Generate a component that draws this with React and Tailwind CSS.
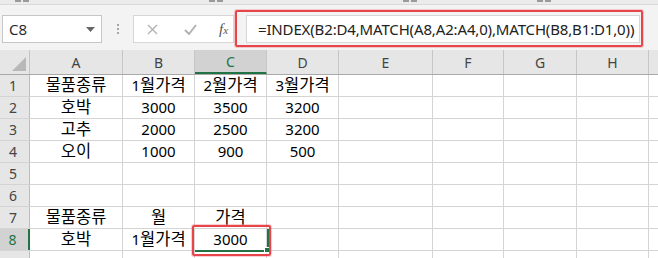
import React from 'react';

const cols = [
  { key: 'A', w: 'w-[93px]' },
  { key: 'B', w: 'w-[72px]' },
  { key: 'C', w: 'w-[72px]' },
  { key: 'D', w: 'w-[72px]' },
  { key: 'E', w: 'w-[94px]' },
  { key: 'F', w: 'w-[71px]' },
  { key: 'G', w: 'w-[73px]' },
  { key: 'H', w: 'w-[72px]' },
];

const data = {
  1: ['물품종류', '1월가격', '2월가격', '3월가격'],
  2: ['호박', '3000', '3500', '3200'],
  3: ['고추', '2000', '2500', '3200'],
  4: ['오이', '1000', '900', '500'],
  5: [],
  6: [],
  7: ['물품종류', '월', '가격'],
  8: ['호박', '1월가격', '3000'],
};

// hangul glyphs a bit larger than digits, as in the sheet's font
const CellText = ({ text }) =>
  text.split(/(\d+)/).filter(Boolean).map((part, i) =>
    /\d/.test(part) ? (
      <span key={i} className="text-[15px]">{part}</span>
    ) : (
      <span key={i} className="text-[16.5px]">{part}</span>
    )
  );

const Cell = ({ w, children }) => (
  <div className={`${w} shrink-0 h-full border-r border-[#d4d4d4] flex items-center justify-center text-black whitespace-nowrap leading-none`}>
    {children}
  </div>
);

const App = () => {
  return (
    <div className="relative w-[658px] h-[258px] overflow-hidden bg-white font-['Noto_Sans','Noto_Sans_CJK_KR',sans-serif]">
      {/* ribbon edge */}
      <div className="h-[5px] bg-[#ebebeb] border-b border-[#dadada] flex">
        <div className="ml-[15px] w-[6px] h-[2px] bg-[#9a9a9a]" />
        <div className="ml-[2px] w-[6px] h-[2px] bg-[#9a9a9a]" />
        <div className="ml-[180px] w-[6px] h-[2px] bg-[#9a9a9a]" />
        <div className="ml-[2px] w-[6px] h-[2px] bg-[#9a9a9a]" />
        <div className="ml-[180px] w-[6px] h-[2px] bg-[#9a9a9a]" />
        <div className="ml-[2px] w-[6px] h-[2px] bg-[#9a9a9a]" />
        <div className="ml-[120px] w-[6px] h-[2px] bg-[#9a9a9a]" />
        <div className="ml-[2px] w-[6px] h-[2px] bg-[#9a9a9a]" />
      </div>

      {/* formula bar */}
      <div className="h-[45px] bg-[#f3f3f3] flex items-start pt-[10px]">
        <div className="ml-[2px] w-[100px] h-[28px] bg-white border border-[#c6c6c6] flex items-center pl-[6px] pr-[6px]">
          <span className="text-[15px] text-[#222] font-['Open_Sans',sans-serif] flex-1">C8</span>
          <svg width="9" height="5" viewBox="0 0 9 5"><path d="M0 0h9L4.5 5z" fill="#666" /></svg>
        </div>
        <div className="w-[31px] h-[28px] flex flex-col items-center justify-center gap-[2px]">
          <div className="w-[2px] h-[2px] bg-[#a6a6a6]" />
          <div className="w-[2px] h-[2px] bg-[#a6a6a6]" />
          <div className="w-[2px] h-[2px] bg-[#a6a6a6]" />
        </div>
        <div className="w-[101px] h-[28px] bg-white border border-[#d6d6d6] flex items-center">
          <svg className="ml-[13px]" width="11" height="11" viewBox="0 0 11 11">
            <path d="M1 1l9 9M10 1l-9 9" stroke="#b3b3b3" strokeWidth="1.4" />
          </svg>
          <svg className="ml-[26px]" width="13" height="11" viewBox="0 0 13 11">
            <path d="M1 6l4 4 7-9" stroke="#b3b3b3" strokeWidth="2" fill="none" />
          </svg>
          <span className="ml-[22px] text-[15px] italic text-[#555] font-['Liberation_Serif',serif] leading-none">
            f<span className="text-[11px]">x</span>
          </span>
        </div>
        <div className="ml-[12px] w-[394px] h-[28px] bg-white border border-[#d6d6d6] flex items-center pl-[11px]">
          <span className="text-[15px] text-[#222] whitespace-nowrap tracking-[-0.15px]">
            =INDEX(B2:D4,MATCH(A8,A2:A4,0),MATCH(B8,B1:D1,0))
          </span>
        </div>
      </div>

      {/* column headers */}
      <div className="h-[25px] flex bg-[#e6e6e6] border-b border-[#a9a9a9]">
        <div className="w-[30px] shrink-0 h-full border-r border-[#c6c6c6] flex items-end justify-end pr-[3px] pb-[3px]">
          <svg width="14" height="14" viewBox="0 0 14 14"><path d="M14 0v14H0z" fill="#b8b8b8" /></svg>
        </div>
        {cols.map((c) => (
          <div
            key={c.key}
            className={`${c.w} shrink-0 h-full flex items-center justify-center text-[14px] ${
              c.key === 'C'
                ? 'bg-[#d2d2d2] text-[#217346] border-b-2 border-[#217346] border-r border-r-[#c6c6c6]'
                : 'text-[#444] border-r border-[#c6c6c6]'
            }`}
          >
            {c.key}
          </div>
        ))}
        <div className="flex-1" />
      </div>

      {/* rows 1-8 */}
      {Object.keys(data).map((r) => {
        const row = data[r];
        const sel = r === '8';
        return (
          <div key={r} className="h-[22px] flex border-b border-[#d4d4d4]">
            <div
              className={`w-[30px] shrink-0 h-full flex items-center justify-center text-[14px] pr-[3px] ${
                sel
                  ? 'bg-[#d2d2d2] text-[#217346] border-r-2 border-[#217346]'
                  : 'bg-[#e6e6e6] text-[#444] border-r border-[#bdbdbd]'
              }`}
            >
              {r}
            </div>
            {cols.map((c, i) => (
              <Cell key={c.key} w={c.w}>
                {row[i] ? <CellText text={row[i]} /> : null}
              </Cell>
            ))}
            <div className="flex-1" />
          </div>
        );
      })}

      {/* row 9, only its top edge shows */}
      <div className="h-[22px] flex">
        <div className="w-[30px] shrink-0 h-full bg-[#e6e6e6] border-r border-[#bdbdbd]" />
        {cols.map((c) => (
          <Cell key={c.key} w={c.w} />
        ))}
      </div>

      {/* selection on C8 (left/top edges sit under the red callout) */}
      <div className="absolute left-[195px] top-[229px] w-[74px] h-[23px] border-r-2 border-b-2 border-[#217346]" />
      <div className="absolute left-[264px] top-[247px] w-[6px] h-[6px] bg-[#217346] border border-white" />

      {/* red callouts */}
      <div className="absolute left-[235px] top-[10px] w-[408px] h-[37px] border-2 border-[#e8454b] rounded-[2px] shadow-[0_0_0_1px_rgba(232,69,75,0.25)]" />
      <div className="absolute left-[192px] top-[225px] w-[79px] h-[31px] border-2 border-[#e8454b] rounded-[2px] shadow-[0_0_0_1px_rgba(232,69,75,0.25)]" />
    </div>
  );
};

export default App;
